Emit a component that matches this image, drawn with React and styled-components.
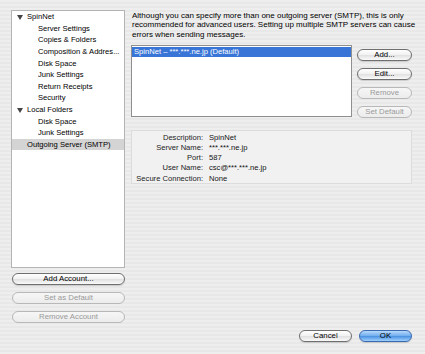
import React from "react";
import styled, { createGlobalStyle } from "styled-components";

const GlobalStyle = createGlobalStyle`
  html, body {
    margin: 0;
    padding: 0;
    background: #ececec;
  }
  * { box-sizing: border-box; }
`;

const tree = [
  { label: "SpinNet", level: 0, open: true },
  { label: "Server Settings", level: 1 },
  { label: "Copies & Folders", level: 1 },
  { label: "Composition & Addres...", level: 1 },
  { label: "Disk Space", level: 1 },
  { label: "Junk Settings", level: 1 },
  { label: "Return Receipts", level: 1 },
  { label: "Security", level: 1 },
  { label: "Local Folders", level: 0, open: true },
  { label: "Disk Space", level: 1 },
  { label: "Junk Settings", level: 1 },
  { label: "Outgoing Server (SMTP)", level: 0, selected: true },
];

const introLines = [
  "Although you can specify more than one outgoing server (SMTP), this is only",
  "recommended for advanced users. Setting up multiple SMTP servers can cause",
  "errors when sending messages.",
];

const details = [
  ["Description:", "SpinNet"],
  ["Server Name:", "***.***.ne.jp"],
  ["Port:", "587"],
  ["User Name:", "csc@***.***.ne.jp"],
  ["Secure Connection:", "None"],
];

export default function App() {
  return (
    <Window>
      <GlobalStyle />
      <LeftCol>
        <Tree>
          {tree.map((item, i) => (
            <TreeRow key={i} selected={item.selected} level={item.level}>
              {item.open && <Disclosure />}
              <RowText>{item.label}</RowText>
            </TreeRow>
          ))}
        </Tree>
        <ButtonStack>
          <AquaButton>Add Account...</AquaButton>
          <AquaButton disabled>Set as Default</AquaButton>
          <AquaButton disabled>Remove Account</AquaButton>
        </ButtonStack>
      </LeftCol>

      <RightCol>
        <Intro>
          {introLines.map((line) => (
            <IntroLine key={line}>{line}</IntroLine>
          ))}
        </Intro>
        <ServerArea>
          <ServerList>
            <ServerItem selected>SpinNet – ***.***.ne.jp (Default)</ServerItem>
          </ServerList>
          <SideButtons>
            <AquaButton>Add...</AquaButton>
            <AquaButton>Edit...</AquaButton>
            <AquaButton disabled>Remove</AquaButton>
            <AquaButton disabled>Set Default</AquaButton>
          </SideButtons>
        </ServerArea>
        <DetailBox>
          {details.map(([k, v]) => (
            <React.Fragment key={k}>
              <DetailLabel>{k}</DetailLabel>
              <DetailValue>{v}</DetailValue>
            </React.Fragment>
          ))}
        </DetailBox>
        <DialogButtons>
          <AquaButton wide>Cancel</AquaButton>
          <AquaButton wide primary>OK</AquaButton>
        </DialogButtons>
      </RightCol>
    </Window>
  );
}

const Window = styled.div`
  width: 425px;
  height: 354px;
  display: flex;
  padding: 10px 13px 12px 11px;
  font-family: "Liberation Sans", Arial, sans-serif;
  font-size: 7.6px;
  color: #111;
  background: repeating-linear-gradient(
    to bottom,
    #eeeeee 0px,
    #eeeeee 2px,
    #e8e8e8 2px,
    #e8e8e8 4px
  );
`;

const LeftCol = styled.div`
  width: 114px;
  flex-shrink: 0;
  display: flex;
  flex-direction: column;
`;

const Tree = styled.div`
  height: 258px;
  background: #fff;
  border: 1px solid #b4b4b4;
`;

const TreeRow = styled.div`
  height: 11.6px;
  display: flex;
  align-items: center;
  padding-left: ${(p) => (p.level ? 26 : 15)}px;
  background: ${(p) => (p.selected ? "#d4d4d4" : "transparent")};
  position: relative;
  white-space: nowrap;
  color: #000;
`;

const Disclosure = styled.span`
  position: absolute;
  left: 5px;
  top: 4px;
  width: 0;
  height: 0;
  border-left: 3px solid transparent;
  border-right: 3px solid transparent;
  border-top: 5px solid #444;
`;

const RowText = styled.span`
  overflow: hidden;
  padding-right: 2px;
`;

const ButtonStack = styled.div`
  display: flex;
  flex-direction: column;
  gap: 7px;
  margin-top: 5px;
  padding-left: 1px;
`;

const AquaButton = styled.button`
  height: 12px;
  width: ${(p) => (p.wide ? "53px" : "100%")};
  padding: 0;
  border-radius: 6px;
  font-family: "Liberation Sans", Arial, sans-serif;
  font-size: 7.8px;
  line-height: 10px;
  color: ${(p) => (p.disabled ? "#9a9a9a" : "#000")};
  border: 1px solid ${(p) => (p.disabled ? "#b8b8b8" : p.primary ? "#3a6ab0" : "#6f6f6f")};
  background: ${(p) =>
    p.primary
      ? "linear-gradient(to bottom, #b9d9fb 0%, #75b1ef 45%, #4f95e4 55%, #9fd0fb 100%)"
      : p.disabled
      ? "linear-gradient(to bottom, #f6f6f6, #ececec)"
      : "linear-gradient(to bottom, #ffffff 0%, #f2f2f2 45%, #e2e2e2 55%, #fafafa 100%)"};
  box-shadow: ${(p) => (p.disabled ? "none" : "0 1px 1px rgba(0,0,0,0.15)")};
`;

const RightCol = styled.div`
  flex: 1;
  min-width: 0;
  margin-left: 6px;
  display: flex;
  flex-direction: column;
`;

const Intro = styled.div`
  margin: 1px 0 0 1px;
  font-size: 8px;
  line-height: 9.3px;
  color: #000;
`;

const IntroLine = styled.div`
  white-space: nowrap;
`;

const ServerArea = styled.div`
  display: flex;
  margin-top: 6px;
`;

const ServerList = styled.div`
  width: 221px;
  height: 72px;
  background: #fff;
  border: 1px solid #8f8f8f;
  padding: 1px 0 0 0;
`;

const ServerItem = styled.div`
  height: 10px;
  line-height: 10px;
  padding-left: 2px;
  background: ${(p) => (p.selected ? "#3875d7" : "transparent")};
  color: ${(p) => (p.selected ? "#fff" : "#111")};
`;

const SideButtons = styled.div`
  width: 55px;
  margin-left: 5px;
  padding-top: 4px;
  display: flex;
  flex-direction: column;
  gap: 7px;
`;

const DetailBox = styled.div`
  margin-top: 12px;
  width: 281px;
  height: 54px;
  border: 1px solid #dcdcdc;
  background: #f1f1f1;
  display: grid;
  grid-template-columns: 71px 1fr;
  grid-auto-rows: 10.2px;
  column-gap: 6px;
  padding-top: 2px;
  line-height: 10.2px;
`;

const DetailLabel = styled.div`
  text-align: right;
  color: #222;
`;

const DetailValue = styled.div`
  color: #111;
`;

const DialogButtons = styled.div`
  margin-top: auto;
  display: flex;
  justify-content: flex-end;
  gap: 7px;
`;
